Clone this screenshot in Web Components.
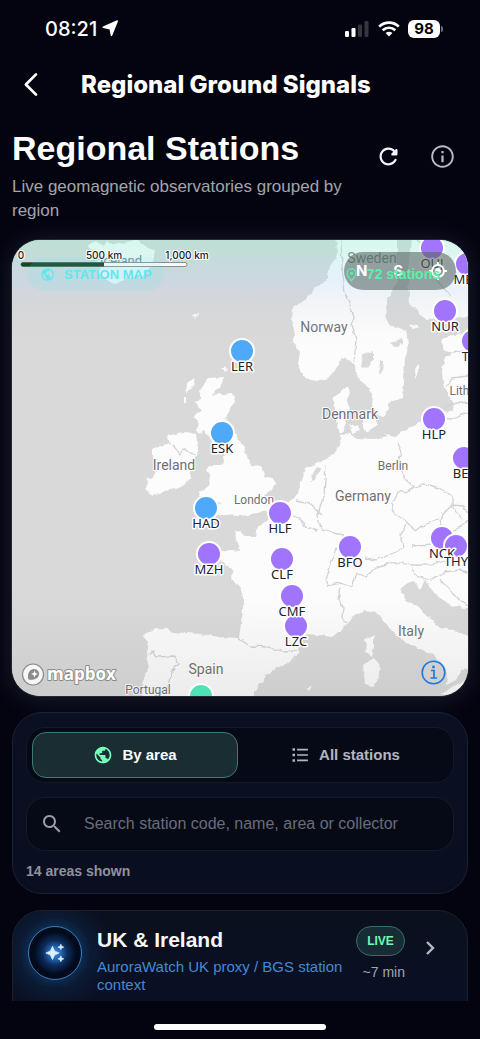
<!DOCTYPE html>
<html lang="en">
<head>
<meta charset="utf-8">
<meta name="viewport" content="width=device-width, initial-scale=1">
<title>Regional Ground Signals</title>
<style>
  html, body { margin: 0; height: 100%; background: #03040f; }
  body { font-family: "Liberation Sans", Arial, sans-serif; color: #fff; }
</style>
</head>
<body>
<signals-app></signals-app>

<script>
const ICONS = {
  back: '<path d="M16 3 7 12l9 9" fill="none" stroke="currentColor" stroke-width="2.4" stroke-linecap="round" stroke-linejoin="round"/>',
  chevron: '<path d="m9 6 6 6-6 6" fill="none" stroke="currentColor" stroke-width="2.4"/>',
  refresh: '<path fill="currentColor" d="M17.65 6.35c-1.63-1.63-3.94-2.57-6.48-2.31-3.67.37-6.69 3.35-7.1 7.02C3.52 15.91 7.27 20 12 20c3.19 0 5.93-1.87 7.21-4.56.32-.67-.16-1.44-.9-1.44-.37 0-.72.2-.88.53-1.13 2.43-3.84 3.97-6.8 3.31-2.22-.49-4.01-2.3-4.48-4.52C5.31 9.44 8.26 6 12 6c1.66 0 3.14.69 4.22 1.78l-1.51 1.51c-.63.63-.19 1.71.7 1.71H19c.55 0 1-.45 1-1V6.41c0-.89-1.08-1.34-1.71-.71l-.64.65z"/>',
  info: '<path fill="currentColor" d="M11 7h2v2h-2zm0 4h2v6h-2zm1-9C6.48 2 2 6.48 2 12s4.48 10 10 10 10-4.48 10-10S17.52 2 12 2zm0 18.300c-4.600 0-8.300-3.700-8.300-8.300S7.400 3.700 12 3.700s8.300 3.700 8.300 8.300-3.700 8.300-8.300 8.300z"/>',
  globe: '<path fill="currentColor" d="M12 2C6.48 2 2 6.48 2 12s4.48 10 10 10 10-4.48 10-10S17.52 2 12 2zm-1 17.93c-3.95-.49-7-3.85-7-7.93 0-.62.08-1.21.21-1.79L9 15v1c0 1.1.9 2 2 2v1.93zm6.9-2.54c-.26-.81-1-1.39-1.9-1.39h-1v-3c0-.55-.45-1-1-1H8v-2h2c.55 0 1-.45 1-1V7h2c1.1 0 2-.9 2-2v-.41c2.93 1.19 5 4.06 5 7.41 0 2.08-.8 3.97-2.1 5.39z"/>',
  list: '<path fill="currentColor" d="M3 4h3v3H3zm0 6.500h3v3H3zM3 17h3v3H3zM8.500 4.500h13v2h-13zm0 6.500h13v2h-13zm0 6.500h13v2h-13z"/>',
  search: '<path fill="currentColor" d="M15.5 14h-.79l-.28-.27C15.41 12.59 16 11.11 16 9.5 16 5.91 13.09 3 9.5 3S3 5.91 3 9.5 5.91 16 9.5 16c1.61 0 3.09-.59 4.23-1.57l.27.28v.79l5 4.99L20.49 19l-4.99-5zm-6 0C7.01 14 5 11.99 5 9.5S7.01 5 9.5 5 14 7.01 14 9.5 11.99 14 9.5 14z"/>',
  sparkles: '<path fill="currentColor" d="M19 8l1-2.200L22.500 5 20 4 19 1.500 18 4 15.500 5 18 5.800zM11.500 9.500L9 4 6.500 9.500 1 12l5.500 2.500L9 20l2.500-5.500L17 12zM19 15.500 18 18l-2.500 1 2.500 1 1 2.500L20 20l2.500-1-2.500-1z" stroke="currentColor" stroke-width=".8" stroke-linejoin="round"/>',
  pin: '<path d="M12 22c-4-4.500-7-8-7-12a7 7 0 0 1 14 0c0 4-3 7.500-7 12z" fill="none" stroke="currentColor" stroke-width="2"/><circle cx="12" cy="10" r="2.500" fill="currentColor"/>'
};

function define(name, html, setup) {
  const template = document.createElement('template');
  template.innerHTML = html;
  customElements.define(name, class extends HTMLElement {
    constructor() {
      super();
      this.attachShadow({ mode: 'open' }).append(template.content.cloneNode(true));
    }
    connectedCallback() { if (setup) setup(this, this.shadowRoot); }
  });
}

define('ui-icon', `
  <style>
    :host { display: block; flex: none; width: var(--size, 24px); height: var(--size, 24px); }
    svg { display: block; width: 100%; height: 100%; }
  </style>
  <svg viewBox="0 0 24 24" aria-hidden="true"></svg>
`, (el, root) => { root.querySelector('svg').innerHTML = ICONS[el.getAttribute('name')] || ''; });

define('status-bar', `
  <style>
    :host { display: flex; justify-content: space-between; align-items: center; height: 57px;
            padding: 0 37px 0 45px; font: 500 20px/24px Inter, sans-serif; color: #fff; }
    div { display: flex; align-items: center; }
    .left { gap: 5px; }
    .right { gap: 8px; }
    svg { display: block; }
    .battery { display: flex; align-items: center; gap: 1px; }
    .level { width: 32px; border-radius: 6px; background: #fff; color: #05060f;
             font: 700 15px/18px Inter, sans-serif; text-align: center; }
    .tip { width: 2px; height: 6px; border-radius: 0 2px 2px 0; background: #6b6c74; }
  </style>
  <div class="left">
    <span>08:21</span>
    <svg width="17" height="17" viewBox="0 0 17 17" aria-hidden="true"><path d="M15.300 1 9.500 15.300 8.200 8.700 1.300 7.300z" fill="#fff" stroke="#fff" stroke-width="1.600" stroke-linejoin="round"/></svg>
  </div>
  <div class="right">
    <svg width="26" height="16" viewBox="0 0 26 16" aria-hidden="true">
      <rect x="1" y="10" width="4" height="6" rx="1.200" fill="#fff"/><rect x="7.500" y="7" width="4" height="9" rx="1.200" fill="#fff"/>
      <rect x="14" y="3.500" width="4" height="12.500" rx="1.200" fill="#34353e"/><rect x="20.500" y="0" width="4" height="16" rx="1.200" fill="#34353e"/>
    </svg>
    <svg width="22" height="16" viewBox="0 0 22 16" aria-hidden="true" fill="none" stroke="#fff" stroke-width="2.700">
      <path d="M1.200 5.600a14 14 0 0 1 19.600 0"/><path d="M4.700 9.300a9 9 0 0 1 12.600 0"/>
      <path d="M11 15.500 7.600 12.100a4.900 4.900 0 0 1 6.800 0z" fill="#fff" stroke="none"/>
    </svg>
    <div class="battery"><span class="level">98</span><span class="tip"></span></div>
  </div>
`);

define('app-bar', `
  <style>
    :host { display: flex; align-items: center; gap: 26px; height: 55px; padding: 0 7px; }
    button { display: grid; place-items: center; width: 48px; height: 48px; padding: 0; border: 0; background: none; color: #fff; }
    ui-icon { --size: 27px; }
    h1 { margin: 0; font: 800 24px/28px Inter, sans-serif; color: #fff; white-space: nowrap; }
  </style>
  <button aria-label="Back"><ui-icon name="back"></ui-icon></button>
  <h1><slot></slot></h1>
`);

define('page-heading', `
  <style>
    :host { display: flex; align-items: flex-start; padding: 16px 2px 17px 0; }
    .text { flex: 1; }
    h2 { margin: 0 0 7px; font-size: 34px; line-height: 40px; font-weight: 700; color: #fff; white-space: nowrap; }
    p { margin: 0; max-width: 350px; font-size: 17px; line-height: 24px; color: #a3a4ad; }
    .actions { display: flex; gap: 6px; padding-top: 4px; }
    button { display: grid; place-items: center; width: 48px; height: 48px; padding: 0; border: 0; background: none; color: #f3f3fb; }
    button + button { color: #b9bac6; }
    ui-icon { --size: 27px; }
  </style>
  <div class="text"><h2><slot name="title"></slot></h2><p><slot></slot></p></div>
  <div class="actions">
    <button aria-label="Refresh"><ui-icon name="refresh"></ui-icon></button>
    <button aria-label="About"><ui-icon name="info"></ui-icon></button>
  </div>
`);

const STATIONS = [
  ['OUJ', 432, 248, 'p'], ['MEK', 467, 264, 'p'], ['NUR', 445, 311, 'p'], ['TAR', 473, 341, 'p'],
  ['HLP', 434, 419, 'p'], ['BEL', 464, 458, 'p'], ['LER', 242, 351, 'b'], ['ESK', 222, 433, 'b'],
  ['HAD', 206, 508, 'b'], ['MZH', 209, 554, 'p'], ['HLF', 280, 513, 'p'], ['CLF', 282, 559, 'p'],
  ['LZC', 296, 626, 'p'], ['CMF', 292, 596, 'p'], ['BFO', 350, 547, 'p'], ['NCK', 442, 538, 'p'],
  ['THY', 456, 546, 'p'], ['', 201, 696, 'g']
];
const PLACES = [
  ['Iceland', 121, 265, 13], ['Sweden', 372, 263, 14], ['Norway', 324, 332, 14], ['Denmark', 350, 419, 14],
  ['Lithuania', 474, 395, 12], ['Berlin', 393, 470, 12], ['Germany', 363, 501, 14], ['London', 254, 504, 12],
  ['Ireland', 174, 470, 14], ['Italy', 411, 636, 14], ['Spain', 206, 674, 14], ['Portugal', 148, 694, 12]
];

define('station-map', `
  <style>
    :host { display: block; position: relative; overflow: hidden; border-radius: 28px; background: #d9d9d9;
            box-shadow: 0 0 0 1px #262833, 0 2px 28px rgba(150, 150, 190, .2); }
    .map { display: block; width: 100%; }
    .land { fill: #fcfcfc; }
    .sea { fill: #d9d9d9; }
    .borders { fill: none; stroke: #d2d2d2; stroke-width: 1.300; stroke-linejoin: round; }
    text { text-anchor: middle; paint-order: stroke; stroke-linejoin: round; stroke: #fff; }
    .place { font-family: Roboto, sans-serif; fill: #6f6f72; stroke-width: 2; }
    .code { font: 13px "Noto Sans", sans-serif; fill: #20222d; stroke-width: 3; }
    .dot { stroke: #fff; stroke-width: 2; }
    .p { fill: #a074fc; } .b { fill: #4fa9fa; } .g { fill: #4fe3b4; }
    .scale-label { font: 500 10px Inter, sans-serif; fill: #222; stroke-width: 2; }
    .logo { font: 700 17px "Open Sans", sans-serif; text-anchor: start; fill: #fff; stroke: #8b8b8b; stroke-width: 2; }
    .chip { position: absolute; display: flex; align-items: center; border-radius: 20px; font-weight: 700; white-space: nowrap; }
    .name { top: 17px; left: 16px; gap: 9px; height: 34px; padding: 0 12px; color: #60e8ee; background: rgba(100, 235, 235, .12); font-size: 13px; }
    .compass { top: 12px; right: 12px; justify-content: space-between; box-sizing: border-box; width: 112px; height: 38px; padding: 0 9px 0 12px;
               background: rgba(88, 100, 96, .58); color: #fff; font: 700 15px/38px Inter, sans-serif; }
    .count { top: 17px; right: 12px; gap: 8px; height: 34px; padding: 0 16px 0 0; color: #5af0a8; font-size: 14px; }
    .name ui-icon, .count ui-icon { --size: 15px; }
    .about { position: absolute; right: 22px; bottom: 11px; width: 25px; height: 25px; padding: 0; border: 0; background: none; }
    .about svg { display: block; }
  </style>
  <svg class="map" viewBox="12 240 456 456" role="img" aria-label="Map of stations in Europe">
    <defs>
      <filter id="coast" x="0" y="0" width="100%" height="100%">
        <feTurbulence type="fractalNoise" baseFrequency=".14" numOctaves="2" seed="4"/>
        <feDisplacementMap in="SourceGraphic" scale="5" xChannelSelector="R" yChannelSelector="G"/>
      </filter>
      <linearGradient id="sky" x1="0" y1="0" x2="0" y2="1">
        <stop offset="0" stop-color="#78f0c8" stop-opacity=".28"/><stop offset=".09" stop-color="#a0d2fa" stop-opacity=".24"/>
        <stop offset=".14" stop-color="#bec8d7" stop-opacity=".14"/><stop offset=".22" stop-color="#bec8d7" stop-opacity="0"/>
        <stop offset=".78" stop-color="#787878" stop-opacity="0"/><stop offset="1" stop-color="#787878" stop-opacity=".12"/>
      </linearGradient>
    </defs>
    <g filter="url(#coast)">
      <rect class="sea" x="0" y="230" width="480" height="480"/>
      <g class="land">
        <path d="M88 244 97 241 103 247 108 240 113 245 127 242 137 240 144 246 155 251 153 262 143 275 127 278 115 284 103 278 97 272 100 267 95 262 103 258 100 252 90 249z"/>
        <path d="M192 315 200 313 195 318zM222 368l4-2 2 4-3 3zM187 383l8-5-2 8-7 8zM184 397l2 0 0 6-2 0z"/>
        <path d="M208 378 224 377 222 384 216 390 213 395 233 393 235 402 230 410 225 418 232 425 238 438 245 450 249 462 252 466 262 467 266 477 274 478 275 485 271 491 264 496 274 499 276 506 268 510 250 515 238 516 222 515 215 515 206 522 192 525 197 516 208 507 221 503 212 499 200 496 199 491 209 486 211 478 206 470 209 466 220 466 224 462 223 456 226 450 214 449 212 442 218 436 208 436 204 430 199 434 197 429 198 421 194 417 200 411 196 403 202 397 199 391 203 386z"/>
        <path d="M170 435 180 433 186 431 196 435 198 448 195 457 192 468 190 478 182 486 167 490 153 495 146 491 145 486 150 481 147 480 156 474 158 465 153 458 153 448 163 446 171 443 167 438z"/>
        <path d="M336 236 337 255 328 270 328 278 316 288 307 297 293 308 292 320 295 335 293 342 300 352 298 365 303 377 317 382 328 378 337 368 342 358 349 360 355 366 356 375 365 384 373 396 372 405 376 414 384 417 389 408 388 403 403 398 404 382 405 358 409 345 408 338 405 330 393 326 387 322 386 302 397 282 397 236z"/>
        <path d="M412 236 408 288 410 302 418 313 427 320 440 318 480 315 480 236z"/>
        <path d="M480 333 452 335 441 340 443 348 452 353 446 358 442 370 443 384 447 393 453 405 452 411 437 417 420 422 405 431 393 437 384 433 388 437 374 440 358 439 348 433 342 435 347 424 345 416 350 408 346 401 350 393 346 387 340 393 332 398 335 408 336 420 340 433 340 448 330 456 316 464 306 468 302 480 297 493 290 502 277 513 269 520 258 527 256 537 244 537 242 531 234 532 239 545 240 551 230 550 220 552 219 558 228 565 233 572 232 578 240 588 243 596 243 610 239 638 220 637 200 634 173 632 167 629 157 628 148 632 143 637 147 642 147 655 148 665 143 682 142 705 254 705 255 693 260 684 267 675 277 668 290 662 298 652 299 642 307 634 320 635 332 637 343 628 350 621 355 614 364 611 377 613 384 622 393 632 404 642 417 648 431 653 441 662 447 673 446 685 456 680 462 670 480 668 480 640 452 630 440 628 428 617 418 606 404 599 401 590 404 584 414 580 421 590 425 580 432 590 438 597 452 605 480 612z"/>
        <path d="M365 641 374 635 374 645 372 657 366 653zM363 665 374 658 380 665 378 682 371 687 365 684zM305 688l6-2-1 5zM350 425l8 0 2 6-8 3zM363 417l9-3 5 10-8 8-6-4zM415 370l4-6 0 9-3 6zM410 326l7-3 2 4-6 2zM441 343l4-3 3 5-5 3zM440 695l12-8 12-6 12 0v20z"/>
      </g>
      <path class="sea" d="M363 355 373 351 373 360 367 368 361 366zM380 360l3 0-1 12-3 3zM390 343l12-4 0 4-8 3zM310 482l6-15 5 2-5 10z"/>
    </g>
    <g class="borders" filter="url(#coast)">
      <path d="M341 240 342 267 345 292 354 316 352 325 356 340 354 362M172 444 180 454 184 448 188 453 195 454M340 433 348 434M397 442 401 452 398 464 404 478 414 487M414 487 406 493 400 490 392 504 395 515 408 523 415 531 424 524 440 518 452 505 463 506 468 512M414 487 424 484 440 488 452 497 452 505M440 518 442 535 436 545 412 546M408 523 400 535 405 547 390 555 375 560 365 558M344 535 333 533 323 530 317 519 320 507 324 495 326 465M290 516 300 519 305 527 318 530M296 500 310 503 322 515M344 535 336 548 326 580 327 586 340 583 352 587 357 573 366 577 376 567 394 562 412 565 430 565M340 587 338 600 343 607 342 618 348 622M236 637 250 646 268 647 285 652 297 651M412 565 414 575 430 580 445 572 460 570 468 572M430 565 445 560 452 550M440 580 450 590 462 602 468 606M440 418 452 419 468 412M446 386 452 378 468 376M446 406 468 402M452 353 468 350M147 655 153 651 156 657 174 656 179 664 171 672 170 682 166 692M452 505 462 520M442 535 452 533 468 520"/>
      <path d="M418 240 428 262 440 284 450 295"/>
    </g>
    <g id="places"></g>
    <rect x="12" y="240" width="456" height="456" fill="url(#sky)"/>
    <g id="stations"></g>
    <rect x="21" y="262.500" width="166" height="4" rx="2" fill="#f7faf8" stroke="#777" stroke-width=".8"/>
    <path d="M23 262.500H104V266.500H23a2 2 0 0 1 0-4z" fill="#154529"/>
    <text class="scale-label" x="21" y="259">0</text><text class="scale-label" x="104" y="259">500 km</text><text class="scale-label" x="187" y="259">1,000 km</text>
    <circle cx="33" cy="674.500" r="10.500" fill="#f7f7f7" stroke="#8b8b8b" stroke-width="1.200"/>
    <path d="M28.500 679.500c-1.500-4 0-10 5-10.500 4-.3 6.200 3 5.500 6-1 4-6 5.500-10.500 4.500z" fill="#8b8b8b"/>
    <path d="m34.500 670.500 1 2.500 2.500 1-2.500 1-1 2.500-1-2.500-2.500-1 2.500-1z" fill="#fff"/>
    <text class="logo" x="47" y="680">mapbox</text>
  </svg>
  <div class="chip name"><ui-icon name="globe"></ui-icon><span>STATION MAP</span></div>
  <div class="chip compass"><span>N</span><span>S</span>
    <svg width="18" height="18" viewBox="0 0 18 18" fill="none" stroke="#fff" stroke-width="1.800" aria-hidden="true"><circle cx="9" cy="9" r="6"/><circle cx="9" cy="9" r="3" fill="#fff" stroke="none"/><path d="M9 0v3M9 15v3M0 9h3M15 9h3"/></svg>
  </div>
  <div class="chip count"><ui-icon name="pin"></ui-icon><span>72 stations</span></div>
  <button class="about" aria-label="Map attribution">
    <svg width="25" height="25" viewBox="0 0 25 25" fill="none" stroke="#1d7be0" aria-hidden="true"><circle cx="12.500" cy="12.500" r="11.300" stroke-width="1.600"/><path d="M10 10.500h3v7.500M9.500 18h6.500" stroke-width="1.700"/><circle cx="12.500" cy="7" r="1.400" fill="#1d7be0" stroke="none"/></svg>
  </button>
`, (el, root) => {
  root.getElementById('places').innerHTML = PLACES.map(([name, x, y, size]) =>
    `<text class="place" x="${x}" y="${y}" font-size="${size}">${name}</text>`).join('');
  root.getElementById('stations').innerHTML =
    STATIONS.map(([, x, y, kind]) => `<circle class="dot ${kind}" cx="${x}" cy="${y}" r="12"/>`).join('') +
    STATIONS.map(([code, x, y]) => code ? `<text class="code" x="${x}" y="${y + 20}">${code}</text>` : '').join('');
});

define('filter-panel', `
  <style>
    :host { display: block; padding: 14px 13px; border: 1px solid #1c2130; border-radius: 30px; background: linear-gradient(#0a1022, #0b0f22 50%, #090e20); }
    .tabs { display: flex; gap: 4px; padding: 4px 5px; border: 1px solid #141927; border-radius: 19px; background: #060a16; }
    button { flex: 1; display: flex; align-items: center; justify-content: center; gap: 9px; height: 46px; padding: 0; border: 1px solid transparent;
             border-radius: 14px; background: none; color: #b3b6c0; font: 700 15px/20px "Liberation Sans", sans-serif; }
    button[aria-pressed="true"] { border-color: #3a7b71; background: #1a2d33; color: #fff; }
    ui-icon { --size: 20px; }
    button[aria-pressed="true"] ui-icon { color: #78ffbd; }
    label { display: flex; align-items: center; gap: 20px; height: 52px; margin: 14px 0 12px; padding: 0 13px; border: 1px solid #171b28; border-radius: 19px; background: #060a16; color: #9a9da9; }
    label ui-icon { --size: 24px; }
    input { flex: 1; min-width: 0; padding: 0; border: 0; outline: 0; background: none; color: #fff; font: 16px/24px "Liberation Sans", sans-serif; }
    input::placeholder { color: #696d79; opacity: 1; }
    p { margin: 0; font-size: 14px; line-height: 16px; font-weight: 700; color: #8f929e; }
  </style>
  <div class="tabs">
    <button aria-pressed="true"><ui-icon name="globe"></ui-icon>By area</button>
    <button aria-pressed="false"><ui-icon name="list"></ui-icon>All stations</button>
  </div>
  <label><ui-icon name="search"></ui-icon><input type="search" aria-label="Search stations" placeholder="Search station code, name, area or collector"></label>
  <p><slot></slot></p>
`);

define('area-card', `
  <style>
    :host { display: flex; align-items: flex-start; height: 120px; padding: 15px 25px 15px 15px; border: 1px solid #1a202e; border-radius: 30px;
            background: radial-gradient(circle at 42px 42px, #0d2c50 26px, #0b1a33 36px, transparent 58px), linear-gradient(#0b101d, #0a1023 40%); }
    .badge { display: grid; place-items: center; flex: none; width: 52px; height: 52px; border: 1px solid #3c7fbd; border-radius: 50%;
             background: radial-gradient(circle, #2a74c8 0 12%, #0c2c5a 34%, #030a1c 58%); color: #dcf1ff; }
    .badge ui-icon { --size: 20px; }
    .text { flex: 1; margin: 1px 8px 0 15px; }
    h3 { margin: 0 0 5px; font-size: 21px; line-height: 26px; color: #f6f7fb; }
    p { margin: 0; font-size: 15px; line-height: 18px; color: #4389d2; }
    .meta { display: flex; flex-direction: column; align-items: flex-end; gap: 7px; font-size: 14px; line-height: 18px; color: #a3a6b2; }
    .live { box-sizing: border-box; width: 49px; border: 1px solid #376e69; border-radius: 15px; background: #182c35; color: #70f8b4; font-size: 12px; line-height: 28px; font-weight: 700; text-align: center; }
    .chevron { margin: 10px 0 0 13px; color: #b5b8c3; }
  </style>
  <div class="badge"><ui-icon name="sparkles"></ui-icon></div>
  <div class="text"><h3><slot name="title"></slot></h3><p><slot></slot></p></div>
  <div class="meta"><span class="live">LIVE</span><slot name="age"></slot></div>
  <ui-icon class="chevron" name="chevron"></ui-icon>
`);

define('signals-app', `
  <style>
    :host { display: flex; flex-direction: column; height: 100vh; background: #03040f; overflow: hidden; }
    main { flex: 1; min-height: 0; overflow: hidden; padding: 0 12px; display: flex; flex-direction: column; gap: 16px; }
    main > * { flex: none; }
    page-heading { margin-bottom: -16px; }
    footer { display: flex; justify-content: center; flex: none; height: 15px; padding-top: 23px; }
    .home { width: 172px; height: 6px; border-radius: 3px; background: #fff; }
  </style>
  <status-bar></status-bar>
  <app-bar>Regional Ground Signals</app-bar>
  <main>
    <page-heading><span slot="title">Regional Stations</span>Live geomagnetic observatories grouped by region</page-heading>
    <station-map></station-map>
    <filter-panel>14 areas shown</filter-panel>
    <area-card><span slot="title">UK &amp; Ireland</span>AuroraWatch UK proxy / BGS station context<span slot="age">~7 min</span></area-card>
  </main>
  <footer><div class="home"></div></footer>
`);
</script>
</body>
</html>
